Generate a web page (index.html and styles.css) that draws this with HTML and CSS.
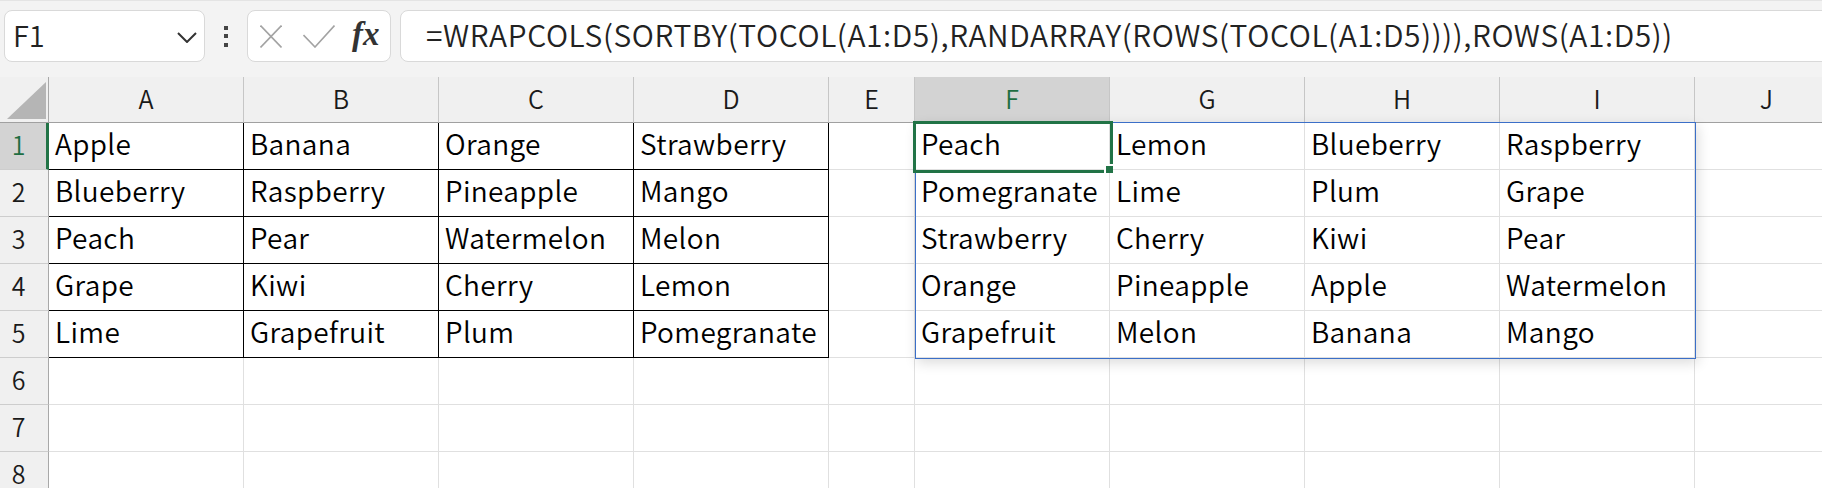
FILE: index.html
```html
<!DOCTYPE html>
<html lang="ja">
<head>
<meta charset="utf-8">
<title>WRAPCOLS</title>
<link rel="stylesheet" href="styles.css">
</head>
<body>
<div class="app">
  <div class="toolbar">
    <div class="namebox">
      <span class="name">F1</span>
      <svg class="chev" width="20" height="11" viewBox="0 0 20 11"><polyline points="1,1 10,10 19,1" fill="none" stroke="#333" stroke-width="2"/></svg>
    </div>
    <div class="dots"><i></i><i></i><i></i></div>
    <div class="fxbox">
      <svg class="ico-x" width="22" height="23" viewBox="0 0 22 23"><line x1="0.5" y1="0.5" x2="21.5" y2="22.5" stroke="#a3a3a3" stroke-width="1.6"/><line x1="21.5" y1="0.5" x2="0.5" y2="22.5" stroke="#a3a3a3" stroke-width="1.6"/></svg>
      <svg class="ico-ok" width="32" height="23" viewBox="0 0 32 23"><polyline points="0.5,10 12,22 31.5,0.5" fill="none" stroke="#a3a3a3" stroke-width="1.6"/></svg>
      <span class="fx">fx</span>
    </div>
    <div class="formula"><span class="ftext">=WRAPCOLS(SORTBY(TOCOL(A1:D5),RANDARRAY(ROWS(TOCOL(A1:D5)))),ROWS(A1:D5))</span></div>
  </div>

  <div class="sheetwrap">
    <div class="sheet">
      <div class="corner"><svg width="49" height="45" viewBox="0 0 49 45"><polygon points="7,42 46,42 46,5" fill="#b5b5b5"/></svg></div>
      <div class="ch">A</div><div class="ch">B</div><div class="ch">C</div><div class="ch">D</div><div class="ch">E</div>
      <div class="ch sel">F</div><div class="ch">G</div><div class="ch">H</div><div class="ch">I</div><div class="ch">J</div>

      <div class="rh sel">1</div>
      <div class="c b">Apple</div><div class="c b">Banana</div><div class="c b">Orange</div><div class="c b">Strawberry</div><div class="c"></div>
      <div class="c">Peach</div><div class="c">Lemon</div><div class="c">Blueberry</div><div class="c">Raspberry</div><div class="c"></div>

      <div class="rh">2</div>
      <div class="c b">Blueberry</div><div class="c b">Raspberry</div><div class="c b">Pineapple</div><div class="c b">Mango</div><div class="c"></div>
      <div class="c">Pomegranate</div><div class="c">Lime</div><div class="c">Plum</div><div class="c">Grape</div><div class="c"></div>

      <div class="rh">3</div>
      <div class="c b">Peach</div><div class="c b">Pear</div><div class="c b">Watermelon</div><div class="c b">Melon</div><div class="c"></div>
      <div class="c">Strawberry</div><div class="c">Cherry</div><div class="c">Kiwi</div><div class="c">Pear</div><div class="c"></div>

      <div class="rh">4</div>
      <div class="c b">Grape</div><div class="c b">Kiwi</div><div class="c b">Cherry</div><div class="c b">Lemon</div><div class="c"></div>
      <div class="c">Orange</div><div class="c">Pineapple</div><div class="c">Apple</div><div class="c">Watermelon</div><div class="c"></div>

      <div class="rh">5</div>
      <div class="c b">Lime</div><div class="c b">Grapefruit</div><div class="c b">Plum</div><div class="c b">Pomegranate</div><div class="c"></div>
      <div class="c">Grapefruit</div><div class="c">Melon</div><div class="c">Banana</div><div class="c">Mango</div><div class="c"></div>

      <div class="rh">6</div>
      <div class="c"></div><div class="c"></div><div class="c"></div><div class="c"></div><div class="c"></div>
      <div class="c"></div><div class="c"></div><div class="c"></div><div class="c"></div><div class="c"></div>

      <div class="rh">7</div>
      <div class="c"></div><div class="c"></div><div class="c"></div><div class="c"></div><div class="c"></div>
      <div class="c"></div><div class="c"></div><div class="c"></div><div class="c"></div><div class="c"></div>

      <div class="rh">8</div>
      <div class="c"></div><div class="c"></div><div class="c"></div><div class="c"></div><div class="c"></div>
      <div class="c"></div><div class="c"></div><div class="c"></div><div class="c"></div><div class="c"></div>
    </div>
    <div class="spill"></div>
    <div class="active"><span class="handle"></span></div>
  </div>
</div>
</body>
</html>
```

FILE: styles.css
```css
html, body {
  margin: 0;
  padding: 0;
  background: #ffffff;
  overflow: hidden;
}
.app {
  width: 1822px;
  height: 488px;
  overflow: hidden;
  font-family: "Noto Sans CJK JP", "Noto Sans", sans-serif;
  font-weight: 350;
  color: #000;
}
.toolbar {
  height: 77px;
  box-sizing: border-box;
  background: #f3f3f3;
  border-top: 1px solid #e4e4e4;
  display: flex;
  align-items: flex-start;
  padding-top: 9px;
  padding-left: 4px;
}
.namebox {
  width: 201px;
  height: 52px;
  box-sizing: border-box;
  background: #fff;
  border: 1px solid #d9d9d9;
  border-radius: 8px;
  display: flex;
  align-items: center;
  padding-left: 8px;
  padding-right: 7px;
}
.name {
  flex: 1;
  font-size: 29px;
  line-height: 1;
  color: #222;
  padding-bottom: 4px;
}
.chev {
  margin-top: 3px;
}
.dots {
  width: 42px;
  height: 52px;
  display: flex;
  flex-direction: column;
  align-items: center;
  justify-content: center;
  gap: 4.5px;
}
.dots i {
  display: block;
  width: 4px;
  height: 4px;
  background: #444;
}
.fxbox {
  width: 144px;
  height: 52px;
  box-sizing: border-box;
  background: #fff;
  border: 1px solid #d9d9d9;
  border-radius: 8px;
  display: flex;
  align-items: center;
  padding-left: 12px;
}
.ico-ok {
  margin-left: 21px;
}
.fx {
  margin-left: 17px;
  font-family: "Liberation Serif", "DejaVu Serif", serif;
  font-style: italic;
  font-weight: bold;
  font-size: 33px;
  line-height: 1;
  color: #333;
  padding-bottom: 4px;
}
.formula {
  flex: 1;
  height: 52px;
  margin-left: 9px;
  margin-right: -20px;
  box-sizing: border-box;
  background: #fff;
  border: 1px solid #d9d9d9;
  border-radius: 8px;
  display: flex;
  align-items: center;
  padding-left: 25px;
  overflow: hidden;
}
.ftext {
  display: inline-block;
  font-size: 30px;
  line-height: 1;
  letter-spacing: 0.6px;
  color: #222;
  white-space: nowrap;
  padding-bottom: 4px;
}

.sheetwrap {
  position: relative;
}
.sheet {
  display: grid;
  grid-template-columns: 49px repeat(4, 195px) 86px repeat(4, 195px) 144px;
  grid-template-rows: 46px repeat(8, 47px);
  background: #fff;
}
.corner {
  background: #f0f0f0;
  border-right: 1px solid #a8a8a8;
  border-bottom: 1px solid #a0a0a0;
  box-sizing: border-box;
  overflow: hidden;
}
.corner svg {
  display: block;
}
.ch {
  background: #f0f0f0;
  box-sizing: border-box;
  border-right: 1px solid #c6c6c6;
  border-bottom: 1px solid #a0a0a0;
  display: flex;
  align-items: center;
  justify-content: center;
  font-size: 25px;
  line-height: 1;
  color: #1a1a1a;
  padding-bottom: 3px;
}
.ch.sel {
  background: #d3d3d3;
  color: #1e6e42;
}
.rh {
  background: #f0f0f0;
  box-sizing: border-box;
  border-right: 1px solid #a8a8a8;
  border-bottom: 1px solid #cdcdcd;
  display: flex;
  align-items: center;
  justify-content: center;
  font-size: 25px;
  line-height: 1;
  color: #1a1a1a;
  padding-right: 11px;
  padding-bottom: 3px;
}
.rh.sel {
  background: #d3d3d3;
  color: #1e6e42;
  border-right: 3px solid #217346;
  padding-right: 9px;
}
.c {
  box-sizing: border-box;
  border-right: 1px solid #e0e0e0;
  border-bottom: 1px solid #e0e0e0;
  display: flex;
  align-items: center;
  padding-left: 6px;
  font-size: 28px;
  line-height: 1;
  letter-spacing: 0.35px;
  white-space: nowrap;
  overflow: hidden;
  padding-bottom: 6px;
}
.c.b {
  border-right-color: #000;
  border-bottom-color: #000;
}
.spill {
  position: absolute;
  left: 915px;
  top: 45px;
  width: 781px;
  height: 237px;
  box-sizing: border-box;
  border: 1px solid #3b6fc8;
  box-shadow: 2px 4px 12px rgba(0, 0, 0, 0.14);
  pointer-events: none;
}
.active {
  position: absolute;
  left: 913px;
  top: 44px;
  width: 200px;
  height: 52px;
  box-sizing: border-box;
  border: 3px solid #217346;
  pointer-events: none;
}
.handle {
  position: absolute;
  right: -3px;
  bottom: -3px;
  width: 7px;
  height: 7px;
  background: #217346;
  box-shadow: -1px -1px 0 1px #fff;
}
```
